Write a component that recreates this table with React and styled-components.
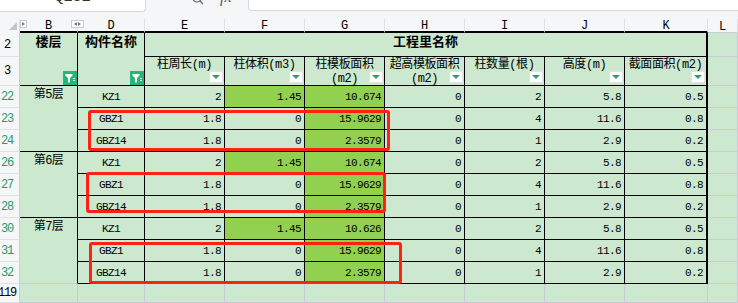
import React from 'react';
import styled, { createGlobalStyle } from 'styled-components';

const GlobalStyle = createGlobalStyle`
  html, body {
    margin: 0;
    padding: 0;
    width: 738px;
    height: 303px;
    overflow: hidden;
    background: #ffffff;
  }
  body {
    font-family: "Liberation Mono", "Noto Sans CJK SC", monospace;
    color: #000;
  }
`;

const GRID_LIGHT = '#c6cad9';
const CELL_BG = '#cce8cf';
const GREEN = '#92d050';

const Page = styled.div`
  position: relative;
  width: 738px;
  height: 303px;
  display: flex;
  flex-direction: column;
  background: #f5f6f8;
`;

const FormulaBar = styled.div`
  height: 19px;
  display: flex;
  align-items: flex-start;
  background: #f5f6f8;
  flex-shrink: 0;
`;

const NameBox = styled.div`
  box-sizing: border-box;
  width: 146px;
  height: 12px;
  background: #fff;
  border: 1px solid #d3d6dd;
  border-top: none;
  border-left: none;
  border-radius: 0 0 4px 0;
  overflow: hidden;
  text-align: center;
  font-size: 15px;
  line-height: 15px;
  color: #333;
  span {
    display: block;
    margin-top: -10px;
  }
`;

const Tools = styled.div`
  width: 102px;
  height: 12px;
  overflow: hidden;
  display: flex;
  align-items: flex-start;
  gap: 16px;
  padding-left: 46px;
  box-sizing: border-box;
  color: #555;
`;

const Fx = styled.span`
  font-family: "Liberation Serif", serif;
  font-style: italic;
  font-size: 16px;
  line-height: 16px;
  margin-top: -11px;
`;

const FormulaInput = styled.div`
  flex: 1;
  height: 10px;
  background: #fff;
  border: 1px solid #d3d6dd;
  border-top: none;
  border-right: none;
  border-radius: 0 0 0 4px;
`;

const Sheet = styled.div`
  flex: 1;
  display: grid;
  grid-template-columns: 20px 58px 67px 80px 80px 80px 80px 80px 80px 83px 30px;
  grid-template-rows: 14px 24px 29px repeat(9, 22px) 1fr;
  background: ${CELL_BG};
`;

const Corner = styled.div`
  position: relative;
  background: #f5f6f8;
  border-right: 1px solid #d8dbe2;
  box-sizing: border-box;
  &::after {
    content: '';
    position: absolute;
    right: 2px;
    bottom: 3px;
    width: 0;
    height: 0;
    border-left: 8px solid transparent;
    border-bottom: 8px solid #c3c5c9;
  }
`;

const ColHead = styled.div`
  position: relative;
  box-sizing: border-box;
  background: #f5f6f8;
  border-right: 1px solid #dde0e6;
  border-bottom: ${p => (p.$edge ? '2px solid #000' : `1px solid ${GRID_LIGHT}`)};
  display: flex;
  align-items: center;
  justify-content: center;
  font-size: 12px;
  line-height: 12px;
  padding-top: 2px;
`;

const Marker = styled.div`
  position: absolute;
  top: 1px;
  ${p => (p.$side === 'left' ? 'left: 0;' : 'right: -7px;')}
  width: ${p => (p.$side === 'left' ? '7px' : '13px')};
  height: 8px;
  box-sizing: border-box;
  background: #fff;
  border: 1px solid #c9ccd3;
  display: flex;
  align-items: center;
  justify-content: center;
  gap: 1px;
  z-index: 2;
  &::before, &::after {
    content: '';
    width: 0;
    height: 0;
    border-top: 2px solid transparent;
    border-bottom: 2px solid transparent;
  }
  &::before {
    ${p => (p.$side === 'left' ? 'border-left: 3px solid #777;' : 'border-right: 3px solid #777;')}
  }
  &::after {
    ${p => (p.$side === 'left' ? 'display: none;' : 'border-left: 3px solid #777;')}
  }
`;

const RowHead = styled.div`
  box-sizing: border-box;
  background: #f5f6f8;
  border-right: 1px solid #c9ccd6;
  border-bottom: 1px solid #dfe1e6;
  display: flex;
  align-items: center;
  justify-content: center;
  padding-right: 5px;
  font-size: 12px;
  letter-spacing: -1.2px;
  color: ${p => (p.$filtered ? '#1f9d68' : '#000')};
  white-space: nowrap;
`;

const Cell = styled.div`
  box-sizing: border-box;
  position: relative;
  grid-row: ${p => (p.$rows ? `span ${p.$rows}` : 'auto')};
  grid-column: ${p => (p.$cols ? `span ${p.$cols}` : 'auto')};
  background: ${p => (p.$green ? GREEN : CELL_BG)};
  border-right: ${p => (p.$thick ? '2px solid #000' : `1px solid ${p.$light ? GRID_LIGHT : '#000'}`)};
  border-bottom: 1px solid ${p => (p.$light || p.$lightBottom ? GRID_LIGHT : '#000')};
  display: flex;
  align-items: center;
  justify-content: ${p => p.$justify || 'flex-end'};
  padding: 0 3px;
  font-size: 11px;
  letter-spacing: -0.6px;
  white-space: nowrap;
`;

const FloorCell = styled(Cell)`
  align-items: flex-start;
  justify-content: center;
  padding-top: 2px;
  font-size: 12px;
  letter-spacing: -0.5px;
  line-height: 14px;
`;

const TitleCell = styled(Cell)`
  flex-direction: column;
  align-items: stretch;
  justify-content: flex-start;
  padding: 2px 0 0;
  font-size: 13px;
  letter-spacing: 0;
  font-weight: bold;
  text-align: center;
  line-height: 16px;
`;

const HeadCell = styled(Cell)`
  align-items: flex-start;
  justify-content: center;
  padding: 1px 0 0;
  font-size: 12px;
  letter-spacing: -0.4px;
  line-height: 14px;
  text-align: center;
  white-space: pre-line;
`;

const FilterButton = styled.div`
  margin-top: auto;
  align-self: flex-end;
  width: 14px;
  height: 14px;
  background: #1eb97b;
  display: flex;
  align-items: center;
  justify-content: center;
`;

const Dropdown = styled.div`
  position: absolute;
  right: 1px;
  bottom: 2px;
  width: 14px;
  height: 12px;
  box-sizing: border-box;
  background: #fff;
  border: 1px solid #e1e3e6;
  display: flex;
  align-items: center;
  justify-content: center;
  &::after {
    content: '';
    width: 0;
    height: 0;
    border-left: 4px solid transparent;
    border-right: 4px solid transparent;
    border-top: 4px solid #1aa96b;
  }
`;

const Highlight = styled.div`
  position: absolute;
  box-sizing: border-box;
  border: 3px solid #ff2214;
  border-radius: 3px;
  pointer-events: none;
`;

const FilterIcon = () => (
  <svg width="14" height="14" viewBox="0 0 14 14">
    <path d="M2.5 3 H9.5 V4.5 L7 7 V11.5 H5 V7 L2.5 4.5 Z" fill="#fff" />
    <rect x="10" y="7" width="2" height="1" fill="#fff" />
    <rect x="10" y="9" width="2" height="1" fill="#fff" />
  </svg>
);

const SearchIcon = () => (
  <svg width="12" height="12" viewBox="0 0 12 12" style={{ marginTop: -7 }}>
    <circle cx="5" cy="5" r="4" fill="none" stroke="#666" strokeWidth="1.2" />
    <path d="M8 8 L11 11" stroke="#666" strokeWidth="1.2" />
  </svg>
);

const letters = ['B', 'D', 'E', 'F', 'G', 'H', 'I', 'J', 'K', 'L'];

const headers = [
  '柱周长(m)',
  '柱体积(m3)',
  '柱模板面积\n(m2)',
  '超高模板面积\n(m2)',
  '柱数量(根)',
  '高度(m)',
  '截面面积(m2)',
];

const groups = [
  {
    floor: '第5层',
    rows: [
      { n: 22, name: 'KZ1', v: ['2', '1.45', '10.674', '0', '2', '5.8', '0.5'], kz: true },
      { n: 23, name: 'GBZ1', v: ['1.8', '0', '15.9629', '0', '4', '11.6', '0.8'] },
      { n: 24, name: 'GBZ14', v: ['1.8', '0', '2.3579', '0', '1', '2.9', '0.2'] },
    ],
  },
  {
    floor: '第6层',
    rows: [
      { n: 26, name: 'KZ1', v: ['2', '1.45', '10.674', '0', '2', '5.8', '0.5'], kz: true },
      { n: 27, name: 'GBZ1', v: ['1.8', '0', '15.9629', '0', '4', '11.6', '0.8'] },
      { n: 28, name: 'GBZ14', v: ['1.8', '0', '2.3579', '0', '1', '2.9', '0.2'] },
    ],
  },
  {
    floor: '第7层',
    rows: [
      { n: 30, name: 'KZ1', v: ['2', '1.45', '10.626', '0', '2', '5.8', '0.5'], kz: true },
      { n: 31, name: 'GBZ1', v: ['1.8', '0', '15.9629', '0', '4', '11.6', '0.8'] },
      { n: 32, name: 'GBZ14', v: ['1.8', '0', '2.3579', '0', '1', '2.9', '0.2'] },
    ],
  },
];

const boxes = [
  { left: 88, top: 110, width: 302, height: 41 },
  { left: 86, top: 172, width: 300, height: 41 },
  { left: 89, top: 242, width: 313, height: 42 },
];

const App = () => {
  return (
    <Page>
      <GlobalStyle />
      <FormulaBar>
        <NameBox>
          <span>Q131</span>
        </NameBox>
        <Tools>
          <SearchIcon />
          <Fx>fx</Fx>
        </Tools>
        <FormulaInput />
      </FormulaBar>

      <Sheet>
        <Corner />
        {letters.map(l => (
          <ColHead key={l} $edge={l !== 'L'}>
            {l === 'B' && <Marker $side="left" />}
            {l === 'B' && <Marker $side="right" />}
            {l}
          </ColHead>
        ))}

        <RowHead>2</RowHead>
        <TitleCell $rows={2}>
          楼层
          <FilterButton>
            <FilterIcon />
          </FilterButton>
        </TitleCell>
        <TitleCell $rows={2}>
          构件名称
          <FilterButton>
            <FilterIcon />
          </FilterButton>
        </TitleCell>
        <TitleCell $cols={7} $thick>
          工程里名称
        </TitleCell>
        <Cell $light />

        <RowHead>3</RowHead>
        {headers.map((h, i) => (
          <HeadCell key={h} $thick={i === headers.length - 1}>
            {h}
            <Dropdown />
          </HeadCell>
        ))}
        <Cell $light />

        {groups.map((g, gi) =>
          g.rows.map((r, ri) => (
            <React.Fragment key={r.n}>
              <RowHead $filtered>{r.n}</RowHead>
              {ri === 0 && (
                <FloorCell $rows={3} $lightBottom={gi === groups.length - 1}>
                  {g.floor}
                </FloorCell>
              )}
              <Cell $justify="center">{r.name}</Cell>
              {r.v.map((val, vi) => (
                <Cell
                  key={vi}
                  $green={vi === 2 || (vi === 1 && r.kz)}
                  $thick={vi === r.v.length - 1}
                >
                  {val}
                </Cell>
              ))}
              <Cell $light />
            </React.Fragment>
          ))
        )}

        <RowHead>119</RowHead>
        {letters.map(l => (
          <Cell key={l} $light />
        ))}
      </Sheet>

      {boxes.map((b, i) => (
        <Highlight key={i} style={b} />
      ))}
    </Page>
  );
};

export default App;
